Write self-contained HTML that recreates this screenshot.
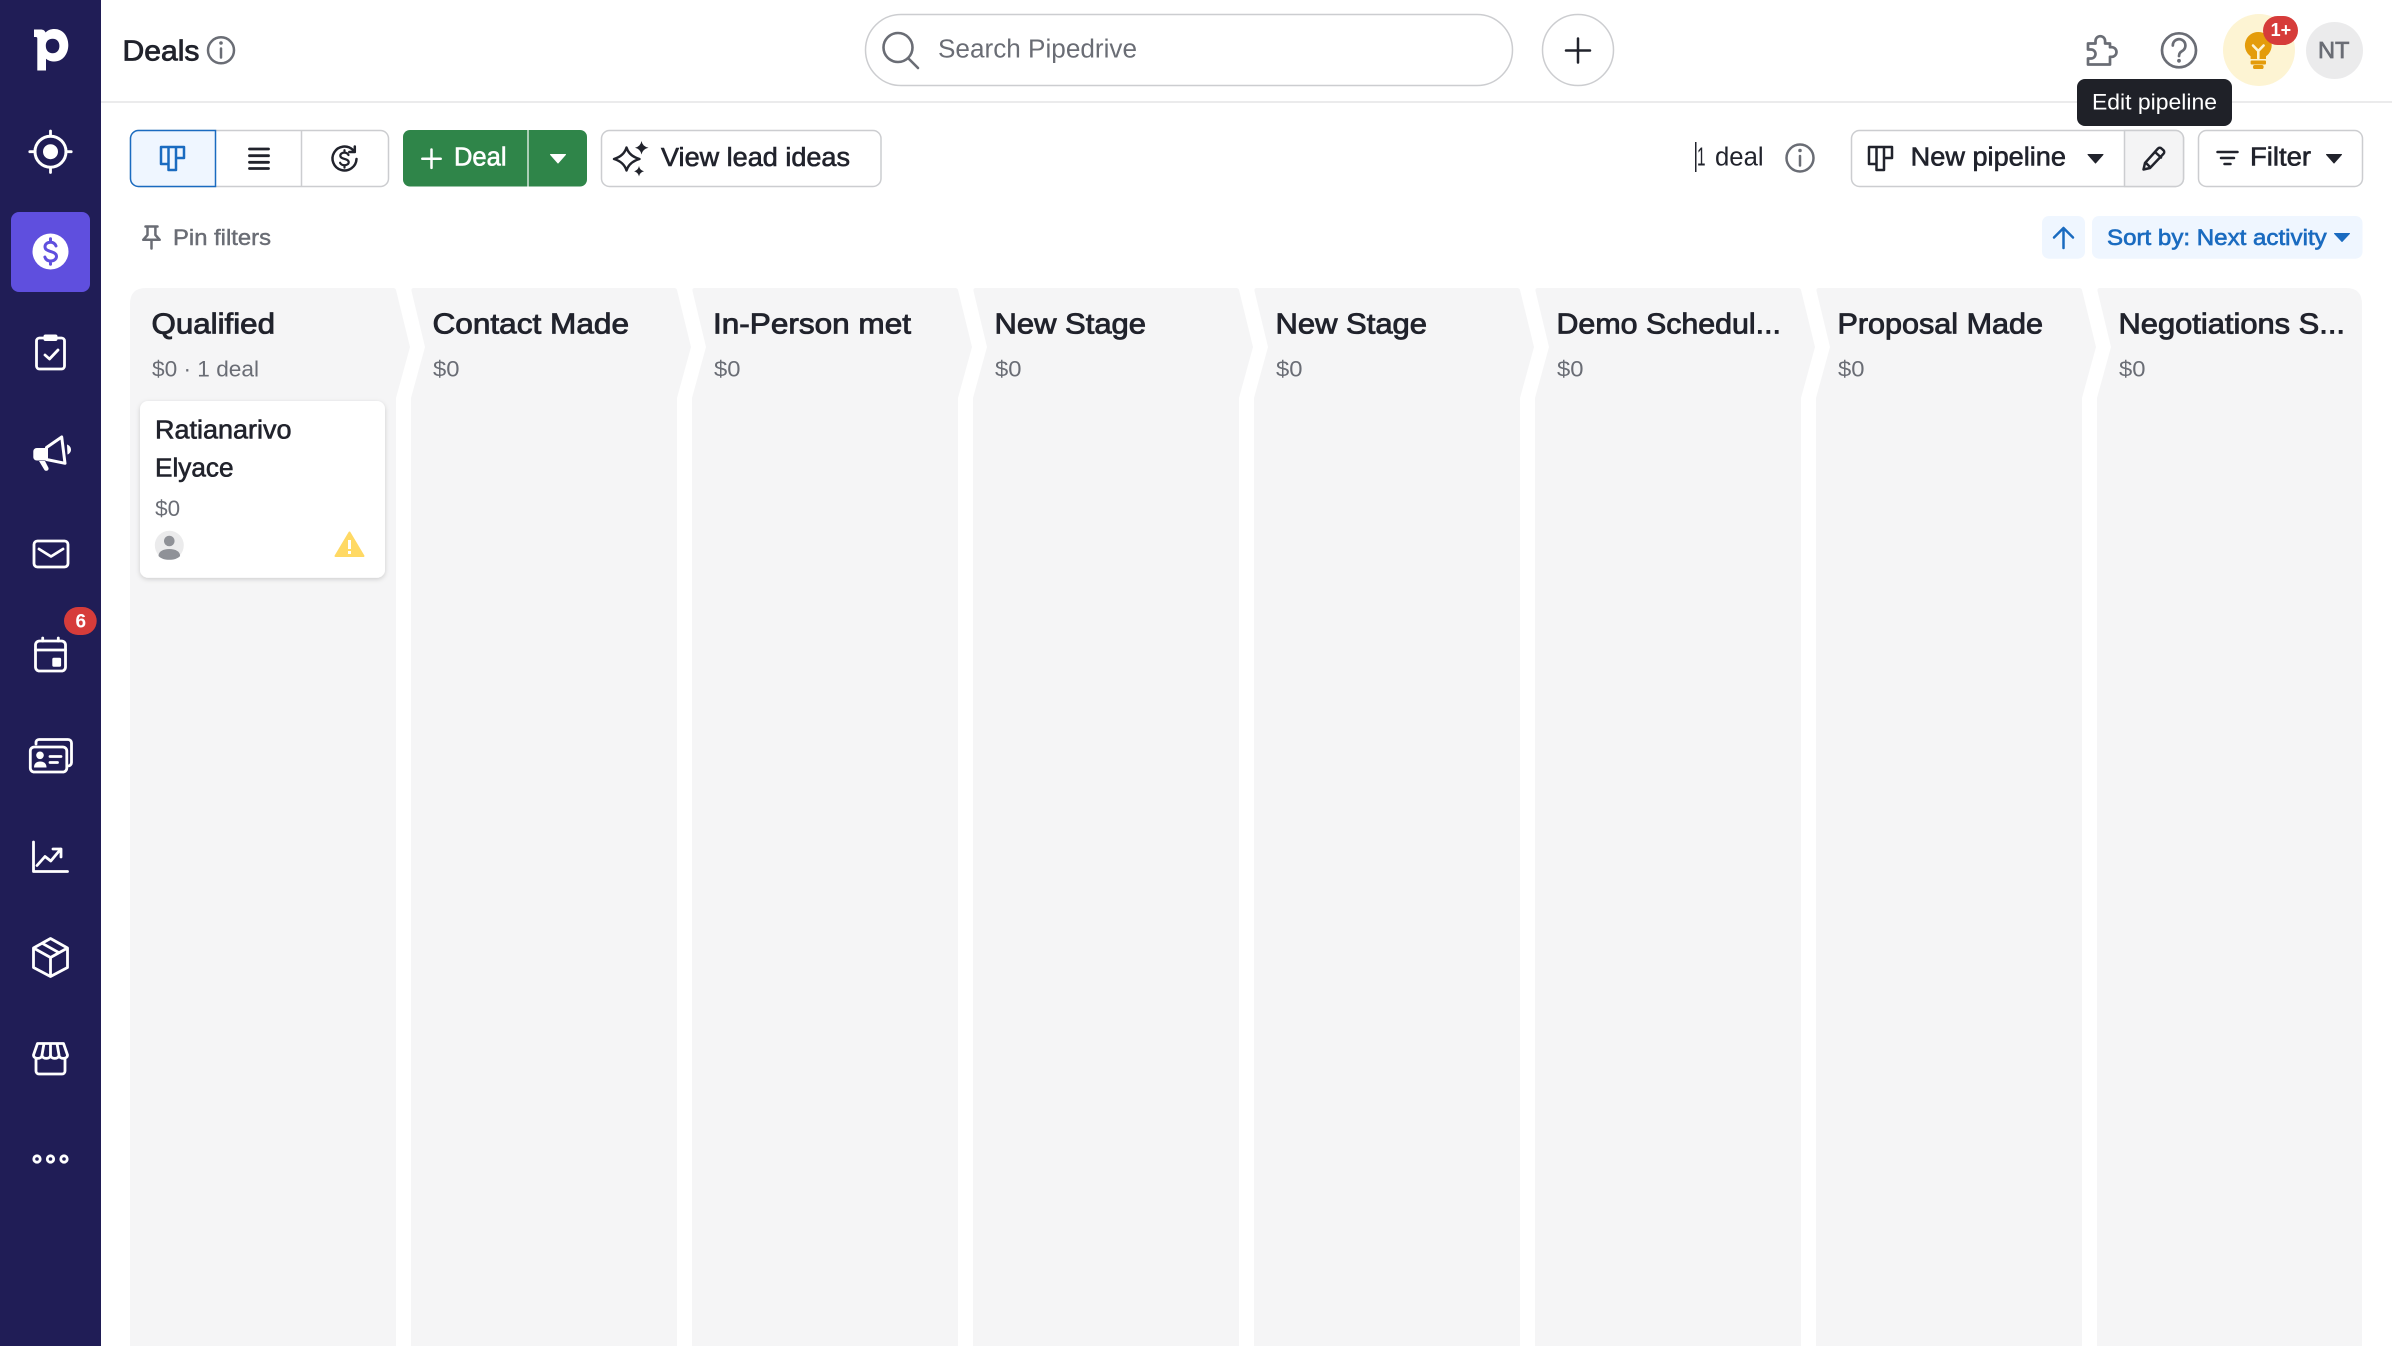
<!DOCTYPE html>
<html lang="en">
<head>
<meta charset="utf-8">
<title>Deals - Pipedrive</title>
<style>
html,body{margin:0;padding:0;background:#fff;width:2392px;height:1346px;overflow:hidden}
svg{display:block}
text{font-family:"Liberation Sans",Arial,sans-serif;fill:#21232c}
.b{font-weight:700}
.s{stroke:currentColor;stroke-width:.8px;color:#21232c}
.m{stroke:currentColor;stroke-width:.6px;color:#21232c}
.g{fill:#6a6d75}
.nav *{stroke-linecap:round;stroke-linejoin:round}
.ln{fill:none;stroke:#fff;stroke-width:2.8;stroke-linecap:round;stroke-linejoin:round}
.gl{fill:none;stroke:#6a6d75;stroke-width:2.5;stroke-linecap:round;stroke-linejoin:round}
.dl{fill:none;stroke:#21232c;stroke-width:2.5;stroke-linecap:round;stroke-linejoin:round}
.bl{fill:none;stroke:#1a6bc0;stroke-width:2.5;stroke-linecap:round;stroke-linejoin:round}
.col{fill:#f5f5f6}
.ti{font-size:29px;stroke:#21232c;stroke-width:.85px}
.su{font-size:22.500px;fill:#6a6d75}
</style>
</head>
<body>
<svg xmlns="http://www.w3.org/2000/svg" width="2392" height="1346" viewBox="0 0 2392 1346">
<rect width="2392" height="1346" fill="#fff"/>

<!-- header line -->
<rect x="101" y="101" width="2291" height="2" fill="#ebebec"/>

<!-- sidebar -->
<g class="nav">
<rect width="101" height="1346" fill="#201d56"/>
<path fill="#fff" fill-rule="evenodd" d="M34 29.500h6.500c2.800 0 4.300 1 5 3C47.800 30.300 50.500 29 54.500 29c8 0 13.800 6.800 13.800 16S62.500 61.500 54.500 61.500c-3.600 0-6.300-1-8.500-2.800V70.500H37.300V38.500c0-1-.4-1.500-1.500-1.500H34ZM52.700 38.800c-4.500 0-6.900 2.800-6.900 7s2.400 7.500 6.900 7.500c4 0 6.700-3 6.700-7.300s-2.700-7.200-6.700-7.200Z"/>
<!-- target -->
<circle class="ln" cx="50.500" cy="151.700" r="15.500" style="stroke-width:3"/>
<circle cx="50.500" cy="151.700" r="7.500" fill="#fff"/>
<path class="ln" d="M50.500 131v5M50.500 167.500v5M29.800 151.700h5M66.200 151.700h5"/>
<!-- active deals -->
<rect x="11" y="212" width="79" height="80" rx="8" fill="#5f4fde"/>
<circle cx="50.500" cy="251.500" r="18" fill="#fff"/>
<path fill="none" stroke="#5f4fde" stroke-width="3" stroke-linecap="round" d="M56 246c-.8-2.300-2.800-3.800-5.500-3.800c-3.200 0-5.500 1.900-5.500 4.500c0 6 11.500 3.800 11.500 9.700c0 2.700-2.500 4.600-5.800 4.600c-2.900 0-5-1.500-5.800-3.900M50.500 238.800v3.400M50.500 261v3.200"/>
<!-- clipboard -->
<rect class="ln" x="36.500" y="338" width="28" height="31" rx="3"/>
<rect x="43.500" y="334.500" width="14" height="6.500" rx="2" fill="#fff"/>
<path class="ln" d="M45 355l4.500 4l8.500-9"/>
<!-- megaphone -->
<path fill="#fff" d="M33.300 451.500c0-2 1.500-3.500 3.500-3.500h10v12.500h-10c-2 0-3.500-1.500-3.500-3.500Z"/>
<path class="ln" d="M46.500 447.500L61.700 437L65 463.300L46.500 459.500Z" style="stroke-width:3"/>
<path fill="#fff" d="M39 461h6l3.300 6.500c.7 1.500 0 2.800-1.300 3.200c-1.200.3-2.400-.2-3-1.500Z"/>
<path fill="#fff" d="M67 444.500c2.500.8 4 3 4 5.200s-1.500 4-3.500 4.800Z"/>
<!-- mail -->
<rect class="ln" x="34" y="541" width="34" height="26" rx="3.500"/>
<path class="ln" d="M39 549l12 7.500l12-7.500"/>
<!-- calendar -->
<rect class="ln" x="35.500" y="641" width="30" height="30" rx="4"/>
<path class="ln" d="M35.500 650h30M42.700 638v3M58.300 638v3"/>
<rect x="52.300" y="657.700" width="8.800" height="9" rx="1.500" fill="#fff"/>
<rect x="64" y="607" width="32.700" height="28" rx="14" fill="#d63c3a"/>
<text x="75.500" y="627.500" font-size="19" class="b" style="fill:#fff">6</text>
<!-- contacts -->
<path class="ln" d="M36 744v-1.500a3 3 0 0 1 3-3h29a3.500 3.500 0 0 1 3.500 3.500v19.500a3.500 3.500 0 0 1-3.500 3.500h-1"/>
<rect class="ln" x="30.300" y="747" width="36.500" height="25" rx="4"/>
<circle cx="40" cy="755.300" r="3.800" fill="#fff"/>
<path fill="#fff" d="M34 767.500c0-4 2.500-6 6.200-6s6.300 2 6.300 6Z"/>
<path class="ln" d="M50 756.500h11M50 762.500h7.500"/>
<!-- chart -->
<path class="ln" d="M33.500 842V871.500H67.500"/>
<path class="ln" d="M37 865.500l8-9l5.800 4.500l10-12M53 849h8v8"/>
<!-- box -->
<path class="ln" d="M50.500 938.500l17 9.500v19.500l-17 9l-17-9V948ZM33.500 948l17 9.500l17-9.500M50.500 957.500V976.500M42 943.200l17 9.500"/>
<!-- store -->
<path class="ln" d="M37.500 1043.500H63.500L67.500 1055c0 4.500-8.500 4.500-8.500 0c0 4.500-8.500 4.500-8.500 0c0 4.500-8.500 4.500-8.500 0c0 4.500-8.500 4.500-8.500 0ZM42 1055L44 1043.500M50.500 1055V1043.500M59 1055L57 1043.500M36 1059V1071a3 3 0 0 0 3 3h23a3 3 0 0 0 3-3V1059"/>
<!-- more -->
<circle class="ln" cx="37" cy="1159" r="3.200"/>
<circle class="ln" cx="50.500" cy="1159" r="3.200"/>
<circle class="ln" cx="64" cy="1159" r="3.200"/>
</g>

<!-- page title -->
<text x="122.500" y="60.500" font-size="28.500" class="s" textLength="77" lengthAdjust="spacingAndGlyphs">Deals</text>
<circle class="gl" cx="221" cy="50.300" r="13"/>
<path class="gl" d="M221 48.500v9"/><circle cx="221" cy="43" r="1.800" fill="#6a6d75"/>

<!-- search -->
<rect x="865.500" y="14.500" width="647" height="71" rx="35.500" fill="#fff" stroke="#cccdd0" stroke-width="1.500"/>
<circle cx="898" cy="47.500" r="14.500" fill="none" stroke="#6a6d75" stroke-width="2.600"/>
<path d="M908.500 58.500L918 68" stroke="#6a6d75" stroke-width="2.600" stroke-linecap="round"/>
<text x="938" y="57.500" font-size="25.500" class="g" textLength="199" lengthAdjust="spacingAndGlyphs">Search Pipedrive</text>
<rect x="1542.500" y="14.500" width="71" height="71" rx="35.500" fill="#fff" stroke="#cccdd0" stroke-width="1.500"/>
<path class="dl" d="M1578 38.500v24M1566 50.500h24"/>

<!-- top right -->
<path class="gl" style="stroke-width:2.700" d="M2088 43.500H2095.500V41a4.800 4.800 0 0 1 9.600 0V43.500H2110V47.200h1.700a4.800 4.800 0 0 1 0 9.600H2110V64.500H2088V58.500h3a4.500 4.500 0 0 0 0-9h-3Z"/>
<circle class="gl" cx="2179" cy="50.300" r="17" style="stroke-width:2.700"/>
<path class="gl" style="stroke-width:2.700" d="M2172.800 45.500a6.300 6.300 0 1 1 9.800 5.200c-2 1.300-3.600 2.300-3.600 5.300"/>
<circle cx="2179" cy="60.800" r="1.900" fill="#6a6d75"/>
<circle cx="2259" cy="50" r="36" fill="#fdf4d3"/>
<path fill="#e49c0b" d="M2258.300 32a13.300 13.300 0 0 1 7.700 24.200V59h-15.400v-2.800A13.300 13.300 0 0 1 2258.300 32Z"/>
<path fill="none" stroke="#fdf4d3" stroke-width="2.600" stroke-linecap="round" stroke-linejoin="round" d="M2253 45.500l5.300 5.500l5.300-5.500M2258.300 51v7"/>
<rect x="2250.600" y="60.500" width="15.400" height="4" rx="1" fill="#e49c0b"/>
<rect x="2253" y="65" width="10.600" height="4" rx="1.800" fill="#e49c0b"/>
<rect x="2263" y="16" width="35" height="29" rx="14.500" fill="#d63c3a"/>
<text x="2270.600" y="36" font-size="18.500" class="b" style="fill:#fff" textLength="20.500" lengthAdjust="spacingAndGlyphs">1+</text>
<circle cx="2334.500" cy="50.500" r="28.500" fill="#ebebec"/>
<text x="2318" y="58" font-size="23" class="g" style="stroke:#6a6d75;stroke-width:.7px" textLength="31.500" lengthAdjust="spacingAndGlyphs">NT</text>

<!-- view switcher -->
<rect x="130.500" y="130.500" width="258" height="56" rx="8" fill="#fff" stroke="#cccdd0" stroke-width="1.500"/>
<path d="M138.500 130.500H215.500V186.500H138.500a8 8 0 0 1-8-8V138.500a8 8 0 0 1 8-8Z" fill="#eff6ff" stroke="#1a6bc0" stroke-width="1.500"/>
<path d="M301.500 131v55" stroke="#cccdd0" stroke-width="1.500"/>
<path class="bl" d="M161 147h7.500v17H161ZM168.500 147h7.500v23h-7.500ZM176 147h8v11h-8Z"/>
<path d="M249.500 149h19M249.500 155.700h19M249.500 162.300h19M249.500 168.500h19" stroke="#21232c" stroke-width="2.800" stroke-linecap="round"/>
<path class="dl" d="M353 150A12 12 0 1 0 356.500 159M354.800 146.500v5.500h-5.500"/>
<path fill="none" stroke="#21232c" stroke-width="2.200" stroke-linecap="round" d="M348.500 155c-.7-1.500-2.200-2.400-4.100-2.400c-2.400 0-4.100 1.300-4.100 3c0 4.200 8.400 2.500 8.400 6.600c0 1.800-1.900 3-4.300 3c-2 0-3.600-.9-4.300-2.400M344.500 150.200v2.300M344.500 165.300v2.300"/>

<!-- add deal -->
<rect x="403" y="130" width="184" height="56.500" rx="7" fill="#2f8549"/>
<path d="M528 130v56.500" stroke="#fff" stroke-width="1.200"/>
<path d="M431.500 149.500v18.400M422.300 158.700h18.400" stroke="#fff" stroke-width="2.500" stroke-linecap="round"/>
<text x="454" y="165.700" font-size="25.500" class="m" style="fill:#fff;color:#fff" textLength="52.500" lengthAdjust="spacingAndGlyphs">Deal</text>
<path d="M550.500 154.500h15l-7.500 8.500Z" fill="#fff" stroke="#fff" stroke-linejoin="round"/>

<!-- lead ideas -->
<rect x="601.500" y="130.500" width="279.500" height="56" rx="8" fill="#fff" stroke="#cccdd0" stroke-width="1.500"/>
<path fill="none" stroke="#21232c" stroke-width="2.400" stroke-linejoin="round" d="M626.500 147.500Q629 156 639.500 159Q629 162 626.500 170.500Q624 162 614 159Q624 156 626.500 147.500Z"/>
<path fill="#21232c" d="M641.500 141Q642.500 146.500 648.500 147.700Q642.500 149 641.500 154.500Q640.500 149 635 147.700Q640.500 146.500 641.500 141ZM639 166Q639.800 170.200 644 171.300Q639.800 172.300 639 176.500Q638.200 172.300 634 171.300Q638.200 170.200 639 166Z"/>
<text x="661" y="166" font-size="25.500" class="m" textLength="189" lengthAdjust="spacingAndGlyphs">View lead ideas</text>

<!-- pin filters -->
<path class="gl" d="M145.500 226.500h12M147.500 226.500v8.500l-4.300 4.800h16.500l-4.300-4.800v-8.500M151.500 240v8.500"/>
<text x="173" y="245" font-size="22.500" class="g" style="stroke:#6a6d75;stroke-width:.45px" textLength="98" lengthAdjust="spacingAndGlyphs">Pin filters</text>

<!-- deal count -->
<rect x="1695" y="142" width="1.500" height="30" fill="#21232c"/>
<text y="165.700" font-size="25.500"><tspan x="1697" textLength="8.500" lengthAdjust="spacingAndGlyphs">1</tspan> <tspan x="1715" textLength="48.600" lengthAdjust="spacingAndGlyphs">deal</tspan></text>
<circle class="gl" cx="1800" cy="158" r="13.500"/>
<path class="gl" d="M1800 156v9.500"/><circle cx="1800" cy="150.500" r="1.800" fill="#6a6d75"/>

<!-- pipeline select -->
<rect x="1851.500" y="130.500" width="332" height="56" rx="8" fill="#fff" stroke="#cccdd0" stroke-width="1.500"/>
<path d="M2124.500 130.500h51a8 8 0 0 1 8 8v40a8 8 0 0 1-8 8h-51Z" fill="#f4f4f5" stroke="#cccdd0" stroke-width="1.500"/>
<path class="dl" d="M1869 147h7.500v17H1869ZM1876.500 147h7.500v23h-7.500ZM1884 147h8v11h-8Z"/>
<text x="1910.700" y="165.700" font-size="25.500" class="m" textLength="155.300" lengthAdjust="spacingAndGlyphs">New pipeline</text>
<path d="M2088 154.500h15l-7.500 8.500Z" fill="#21232c" stroke="#21232c" stroke-linejoin="round"/>
<path class="dl" d="M2143.500 169.500l1.500-6.500L2158 148.500a2.500 2.500 0 0 1 3.500 0l2 1.800a2.500 2.500 0 0 1 0 3.500L2150 168ZM2145.500 162.500l5 5M2155 152l6 5.500"/>

<!-- filter -->
<rect x="2198.500" y="130.500" width="164" height="56" rx="8" fill="#fff" stroke="#cccdd0" stroke-width="1.500"/>
<path d="M2217.500 152h20M2221 158h13M2224.500 164h6" stroke="#21232c" stroke-width="2.500" stroke-linecap="round"/>
<text x="2250" y="165.700" font-size="25.500" class="m" textLength="61" lengthAdjust="spacingAndGlyphs">Filter</text>
<path d="M2326.500 154.500h15l-7.500 8.500Z" fill="#21232c" stroke="#21232c" stroke-linejoin="round"/>

<!-- sort -->
<rect x="2042" y="216" width="43" height="42.700" rx="7" fill="#eff6ff"/>
<path class="bl" d="M2063.500 248V228M2054 237.500l9.500-9.500l9.500 9.500"/>
<rect x="2092" y="216" width="270.500" height="42.700" rx="7" fill="#eff6ff"/>
<text x="2107" y="245" font-size="22.500" style="fill:#1a6bc0;stroke:#1a6bc0;stroke-width:.65px" textLength="219.700" lengthAdjust="spacingAndGlyphs">Sort by: Next activity</text>
<path d="M2334.500 233.500h15l-7.500 8Z" fill="#1a6bc0" stroke="#1a6bc0" stroke-linejoin="round"/>

<!-- columns -->
<path class="col" d="M146 288H393Q395.500 288 396 290L410 347L396 398V1346H130V304Q130 288 146 288Z"/>
<path class="col" d="M414 288H674Q676.500 288 677 290L691 347L677 398V1346H411V398L425 347L411.500 291Q411 288 414 288Z"/>
<path class="col" d="M695 288H955Q957.500 288 958 290L972 347L958 398V1346H692V398L706 347L692.500 291Q692 288 695 288Z"/>
<path class="col" d="M976 288H1236Q1238.500 288 1239 290L1253 347L1239 398V1346H973V398L987 347L973.500 291Q973 288 976 288Z"/>
<path class="col" d="M1257 288H1517Q1519.500 288 1520 290L1534 347L1520 398V1346H1254V398L1268 347L1254.500 291Q1254 288 1257 288Z"/>
<path class="col" d="M1538 288H1798Q1800.500 288 1801 290L1815 347L1801 398V1346H1535V398L1549 347L1535.500 291Q1535 288 1538 288Z"/>
<path class="col" d="M1819 288H2079Q2081.500 288 2082 290L2096 347L2082 398V1346H1816V398L1830 347L1816.500 291Q1816 288 1819 288Z"/>
<path class="col" d="M2100 288H2346Q2362 288 2362 304V1346H2097V398L2111 347L2097.500 291Q2097 288 2100 288Z"/>

<text class="ti" x="151.500" y="333.500" textLength="123.500" lengthAdjust="spacingAndGlyphs">Qualified</text>
<text class="su" x="152" y="376.700" textLength="107" lengthAdjust="spacingAndGlyphs">$0 · 1 deal</text>
<text class="ti" x="432.500" y="333.500" textLength="196.500" lengthAdjust="spacingAndGlyphs">Contact Made</text>
<text class="su" x="433" y="376.700" textLength="26.500" lengthAdjust="spacingAndGlyphs">$0</text>
<text class="ti" x="713" y="333.500" textLength="198" lengthAdjust="spacingAndGlyphs">In-Person met</text>
<text class="su" x="714" y="376.700" textLength="26.500" lengthAdjust="spacingAndGlyphs">$0</text>
<text class="ti" x="994.500" y="333.500" textLength="151.500" lengthAdjust="spacingAndGlyphs">New Stage</text>
<text class="su" x="995" y="376.700" textLength="26.500" lengthAdjust="spacingAndGlyphs">$0</text>
<text class="ti" x="1275.500" y="333.500" textLength="151.500" lengthAdjust="spacingAndGlyphs">New Stage</text>
<text class="su" x="1276" y="376.700" textLength="26.500" lengthAdjust="spacingAndGlyphs">$0</text>
<text class="ti" x="1556.500" y="333.500" textLength="224.500" lengthAdjust="spacingAndGlyphs">Demo Schedul...</text>
<text class="su" x="1557" y="376.700" textLength="26.500" lengthAdjust="spacingAndGlyphs">$0</text>
<text class="ti" x="1837.500" y="333.500" textLength="205.500" lengthAdjust="spacingAndGlyphs">Proposal Made</text>
<text class="su" x="1838" y="376.700" textLength="26.500" lengthAdjust="spacingAndGlyphs">$0</text>
<text class="ti" x="2118.500" y="333.500" textLength="226.500" lengthAdjust="spacingAndGlyphs">Negotiations S...</text>
<text class="su" x="2119" y="376.700" textLength="26.500" lengthAdjust="spacingAndGlyphs">$0</text>

<!-- deal card -->
<defs><filter id="sh" x="-10%" y="-10%" width="120%" height="125%"><feDropShadow dx="0" dy="1.500" stdDeviation="2.500" flood-color="#000" flood-opacity=".17"/></filter></defs>
<rect x="140" y="401" width="245" height="176.700" rx="8" fill="#fff" filter="url(#sh)"/>
<text x="155" y="438.500" font-size="25.500" class="m" textLength="136.500" lengthAdjust="spacingAndGlyphs">Ratianarivo</text>
<text x="155" y="476.700" font-size="25.500" class="m" textLength="78.500" lengthAdjust="spacingAndGlyphs">Elyace</text>
<text x="155.200" y="516" font-size="22" class="g" textLength="25" lengthAdjust="spacingAndGlyphs">$0</text>
<circle cx="169.300" cy="545.300" r="14.500" fill="#ebebec"/>
<circle cx="169.300" cy="541" r="5.300" fill="#8f9197"/>
<path d="M158.500 556c0-4.500 4.500-7 10.800-7s10.800 2.500 10.800 7c-2.500 2.800-6.500 3.800-10.800 3.800s-8.300-1-10.800-3.800Z" fill="#8f9197"/>
<path d="M349.500 532.500L363.500 556H335.500Z" fill="#ffd964" stroke="#ffd964" stroke-width="2" stroke-linejoin="round"/>
<rect x="348" y="540" width="3" height="9" fill="#fff"/><rect x="348" y="551" width="3" height="3" fill="#fff"/>

<!-- tooltip -->
<rect x="2077" y="79" width="155" height="47" rx="8" fill="#1f2128"/>
<text x="2092" y="109.300" font-size="22.500" style="fill:#fff" textLength="125" lengthAdjust="spacingAndGlyphs">Edit pipeline</text>
</svg>
</body>
</html>
